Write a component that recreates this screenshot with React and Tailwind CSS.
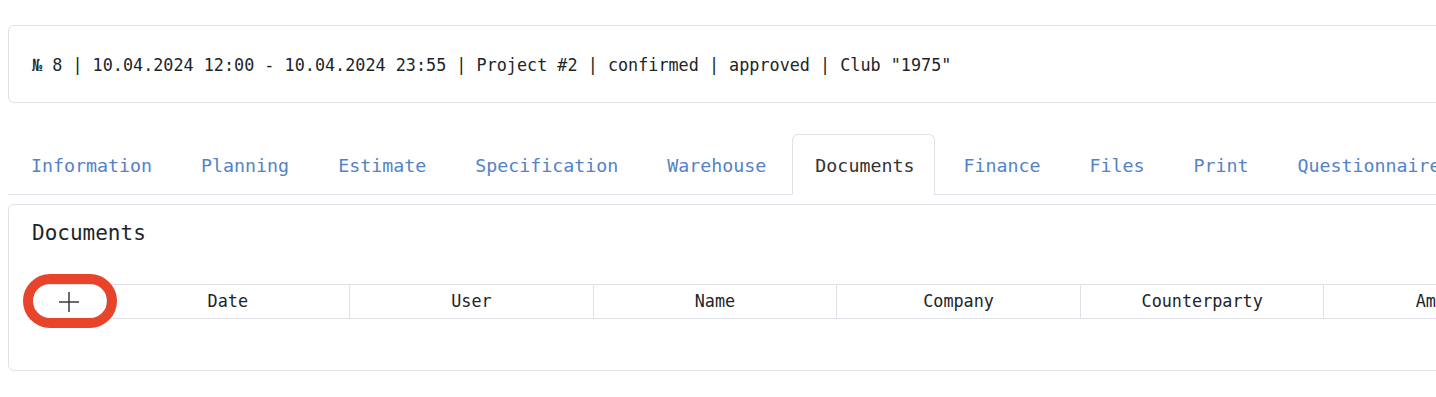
import React, { useState } from "react"

const tabs = ["Information", "Planning", "Estimate", "Specification", "Warehouse", "Documents", "Finance", "Files", "Print", "Questionnaire", "History"]
const columns = ["Date", "User", "Name", "Company", "Counterparty", "Amount"]

function PlusIcon() {
  return (
    <svg width="22" height="22" viewBox="0 0 22 22" fill="none" stroke="#3a3a3a" strokeWidth="1.5">
      <path d="M11 1v20M1 11h20" />
    </svg>
  )
}

export default function App() {
  const [activeTab, setActiveTab] = useState("Documents")

  return (
    <div className="w-full h-[397px] overflow-hidden bg-white font-['DejaVu_Sans_Mono',monospace] text-[#212529]">
      <div className="w-[1800px] px-2 pt-[25px]">
        {/* event summary */}
        <div className="h-[78px] flex items-center border border-[#dee2e6] rounded-md pl-[23px] pt-1 text-[16.8px]">
          № 8 | 10.04.2024 12:00 - 10.04.2024 23:55 | Project #2 | confirmed | approved | Club "1975"
        </div>

        {/* tabs */}
        <ul className="flex mt-[31px] border-b border-[#dee2e6]">
          {tabs.map((t) => (
            <li key={t} className="-mb-px mr-[5px]">
              <button
                onClick={() => setActiveTab(t)}
                className={
                  "h-[61px] pl-[22px] pr-[20px] pt-[2px] border rounded-t-md text-[18.3px] " +
                  (activeTab === t
                    ? "border-[#dee2e6] border-b-white bg-white text-[#333333]"
                    : "border-transparent text-[#5383c6]")
                }
              >
                {t}
              </button>
            </li>
          ))}
        </ul>

        {/* documents panel */}
        <div className="relative mt-[9px] h-[167px] border border-[#dee2e6] rounded-md pl-[23px]">
          <h2 className="pt-[14px] text-[21px] leading-[28px]">Documents</h2>
          <table className="mt-[37px] border-collapse table-fixed w-[1535.6px] text-[16.8px]">
            <thead>
              <tr className="h-[34px] border-y border-[#dee2e6]">
                <th className="w-[74px] font-normal">
                  <div className="flex justify-center">
                    <PlusIcon />
                  </div>
                </th>
                {columns.map((c) => (
                  <th key={c} className="w-[243.6px] font-normal border-l border-[#dee2e6]">
                    {c}
                  </th>
                ))}
              </tr>
            </thead>
          </table>
          <div className="absolute left-[14px] top-[69px] w-[94px] h-[54px] border-[10px] border-[#e8432b] rounded-full" />
        </div>
      </div>
    </div>
  )
}
